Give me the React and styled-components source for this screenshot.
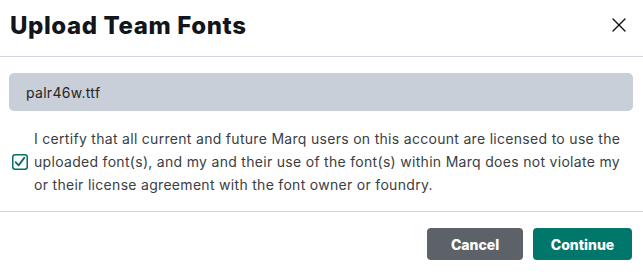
import React from "react";
import styled, { createGlobalStyle } from "styled-components";
import { X } from "lucide-react";

const GlobalStyle = createGlobalStyle`
  html, body {
    margin: 0;
    padding: 0;
    background: #ffffff;
  }
  body {
    font-family: Inter, "Noto Sans", sans-serif;
  }
`;

const Dialog = styled.div`
  width: 643px;
  height: 274px;
  background: #ffffff;
  display: flex;
  flex-direction: column;
`;

const Header = styled.div`
  display: flex;
  align-items: center;
  justify-content: space-between;
  padding: 0 12px 0 10px;
  border-bottom: 1px solid #d2d5de;
  box-sizing: border-box;
  height: 57px;
`;

const Title = styled.h1`
  margin: 0;
  font-family: Inter, "Noto Sans", sans-serif;
  font-weight: 800;
  font-size: 24px;
  letter-spacing: 0.6px;
  color: #12161c;
  padding-bottom: 6px;
`;

const CloseButton = styled.button`
  border: 0;
  background: none;
  padding: 0;
  width: 24px;
  height: 24px;
  display: flex;
  align-items: center;
  justify-content: center;
  color: #111;
  cursor: pointer;
  margin-bottom: 6px;
`;

const Body = styled.div`
  padding: 16px 10px 15px 9px;
  display: flex;
  flex-direction: column;
  gap: 16px;
  border-bottom: 1px solid #d2d5de;
`;

const FileField = styled.div`
  height: 38px;
  border-radius: 5px;
  background: #c9cfd8;
  display: flex;
  align-items: center;
  padding-left: 17px;
  font-size: 14px;
  letter-spacing: 0.3px;
  color: #2a2422;
`;

const CertifyRow = styled.label`
  display: flex;
  align-items: center;
  gap: 6px;
  padding-left: 3px;
  cursor: pointer;
`;

const CheckBox = styled.span`
  flex: 0 0 16px;
  width: 16px;
  height: 16px;
  display: flex;
`;

const CertifyText = styled.p`
  margin: 0;
  font-size: 14px;
  line-height: 23px;
  letter-spacing: 0.3px;
  color: #3a3e44;
  width: 592px;
`;

const Footer = styled.div`
  display: flex;
  justify-content: flex-end;
  gap: 10px;
  padding: 16px 11px 0 0;
`;

const Button = styled.button`
  height: 32px;
  width: ${(p) => p.$w}px;
  border: 0;
  border-radius: 4px;
  background: ${(p) => (p.$primary ? "#00776a" : "#5d6269")};
  color: #ffffff;
  font-family: Inter, "Noto Sans", sans-serif;
  font-weight: 800;
  font-size: 14px;
  cursor: pointer;
`;

const CheckIcon = () => (
  <svg width="16" height="16" viewBox="0 0 16 16">
    <rect x="0.75" y="0.75" width="14.5" height="14.5" rx="2.5" fill="#ffffff" stroke="#0b6e63" strokeWidth="1.5" />
    <path d="M3.6 8.2 L6.6 11.4 L12.4 3.6" fill="none" stroke="#0b6e63" strokeWidth="1.8" strokeLinecap="round" strokeLinejoin="round" />
  </svg>
);

export default function App() {
  return (
    <>
      <GlobalStyle />
      <Dialog>
        <Header>
          <Title>Upload Team Fonts</Title>
          <CloseButton aria-label="Close">
            <X size={24} strokeWidth={1.4} />
          </CloseButton>
        </Header>
        <Body>
          <FileField>palr46w.ttf</FileField>
          <CertifyRow>
            <CheckBox>
              <CheckIcon />
            </CheckBox>
            <CertifyText>
              I certify that all current and future Marq users on this account are licensed to use the
              uploaded font(s), and my and their use of the font(s) within Marq does not violate my or
              their license agreement with the font owner or foundry.
            </CertifyText>
          </CertifyRow>
        </Body>
        <Footer>
          <Button $w={96}>Cancel</Button>
          <Button $w={99} $primary>Continue</Button>
        </Footer>
      </Dialog>
    </>
  );
}
